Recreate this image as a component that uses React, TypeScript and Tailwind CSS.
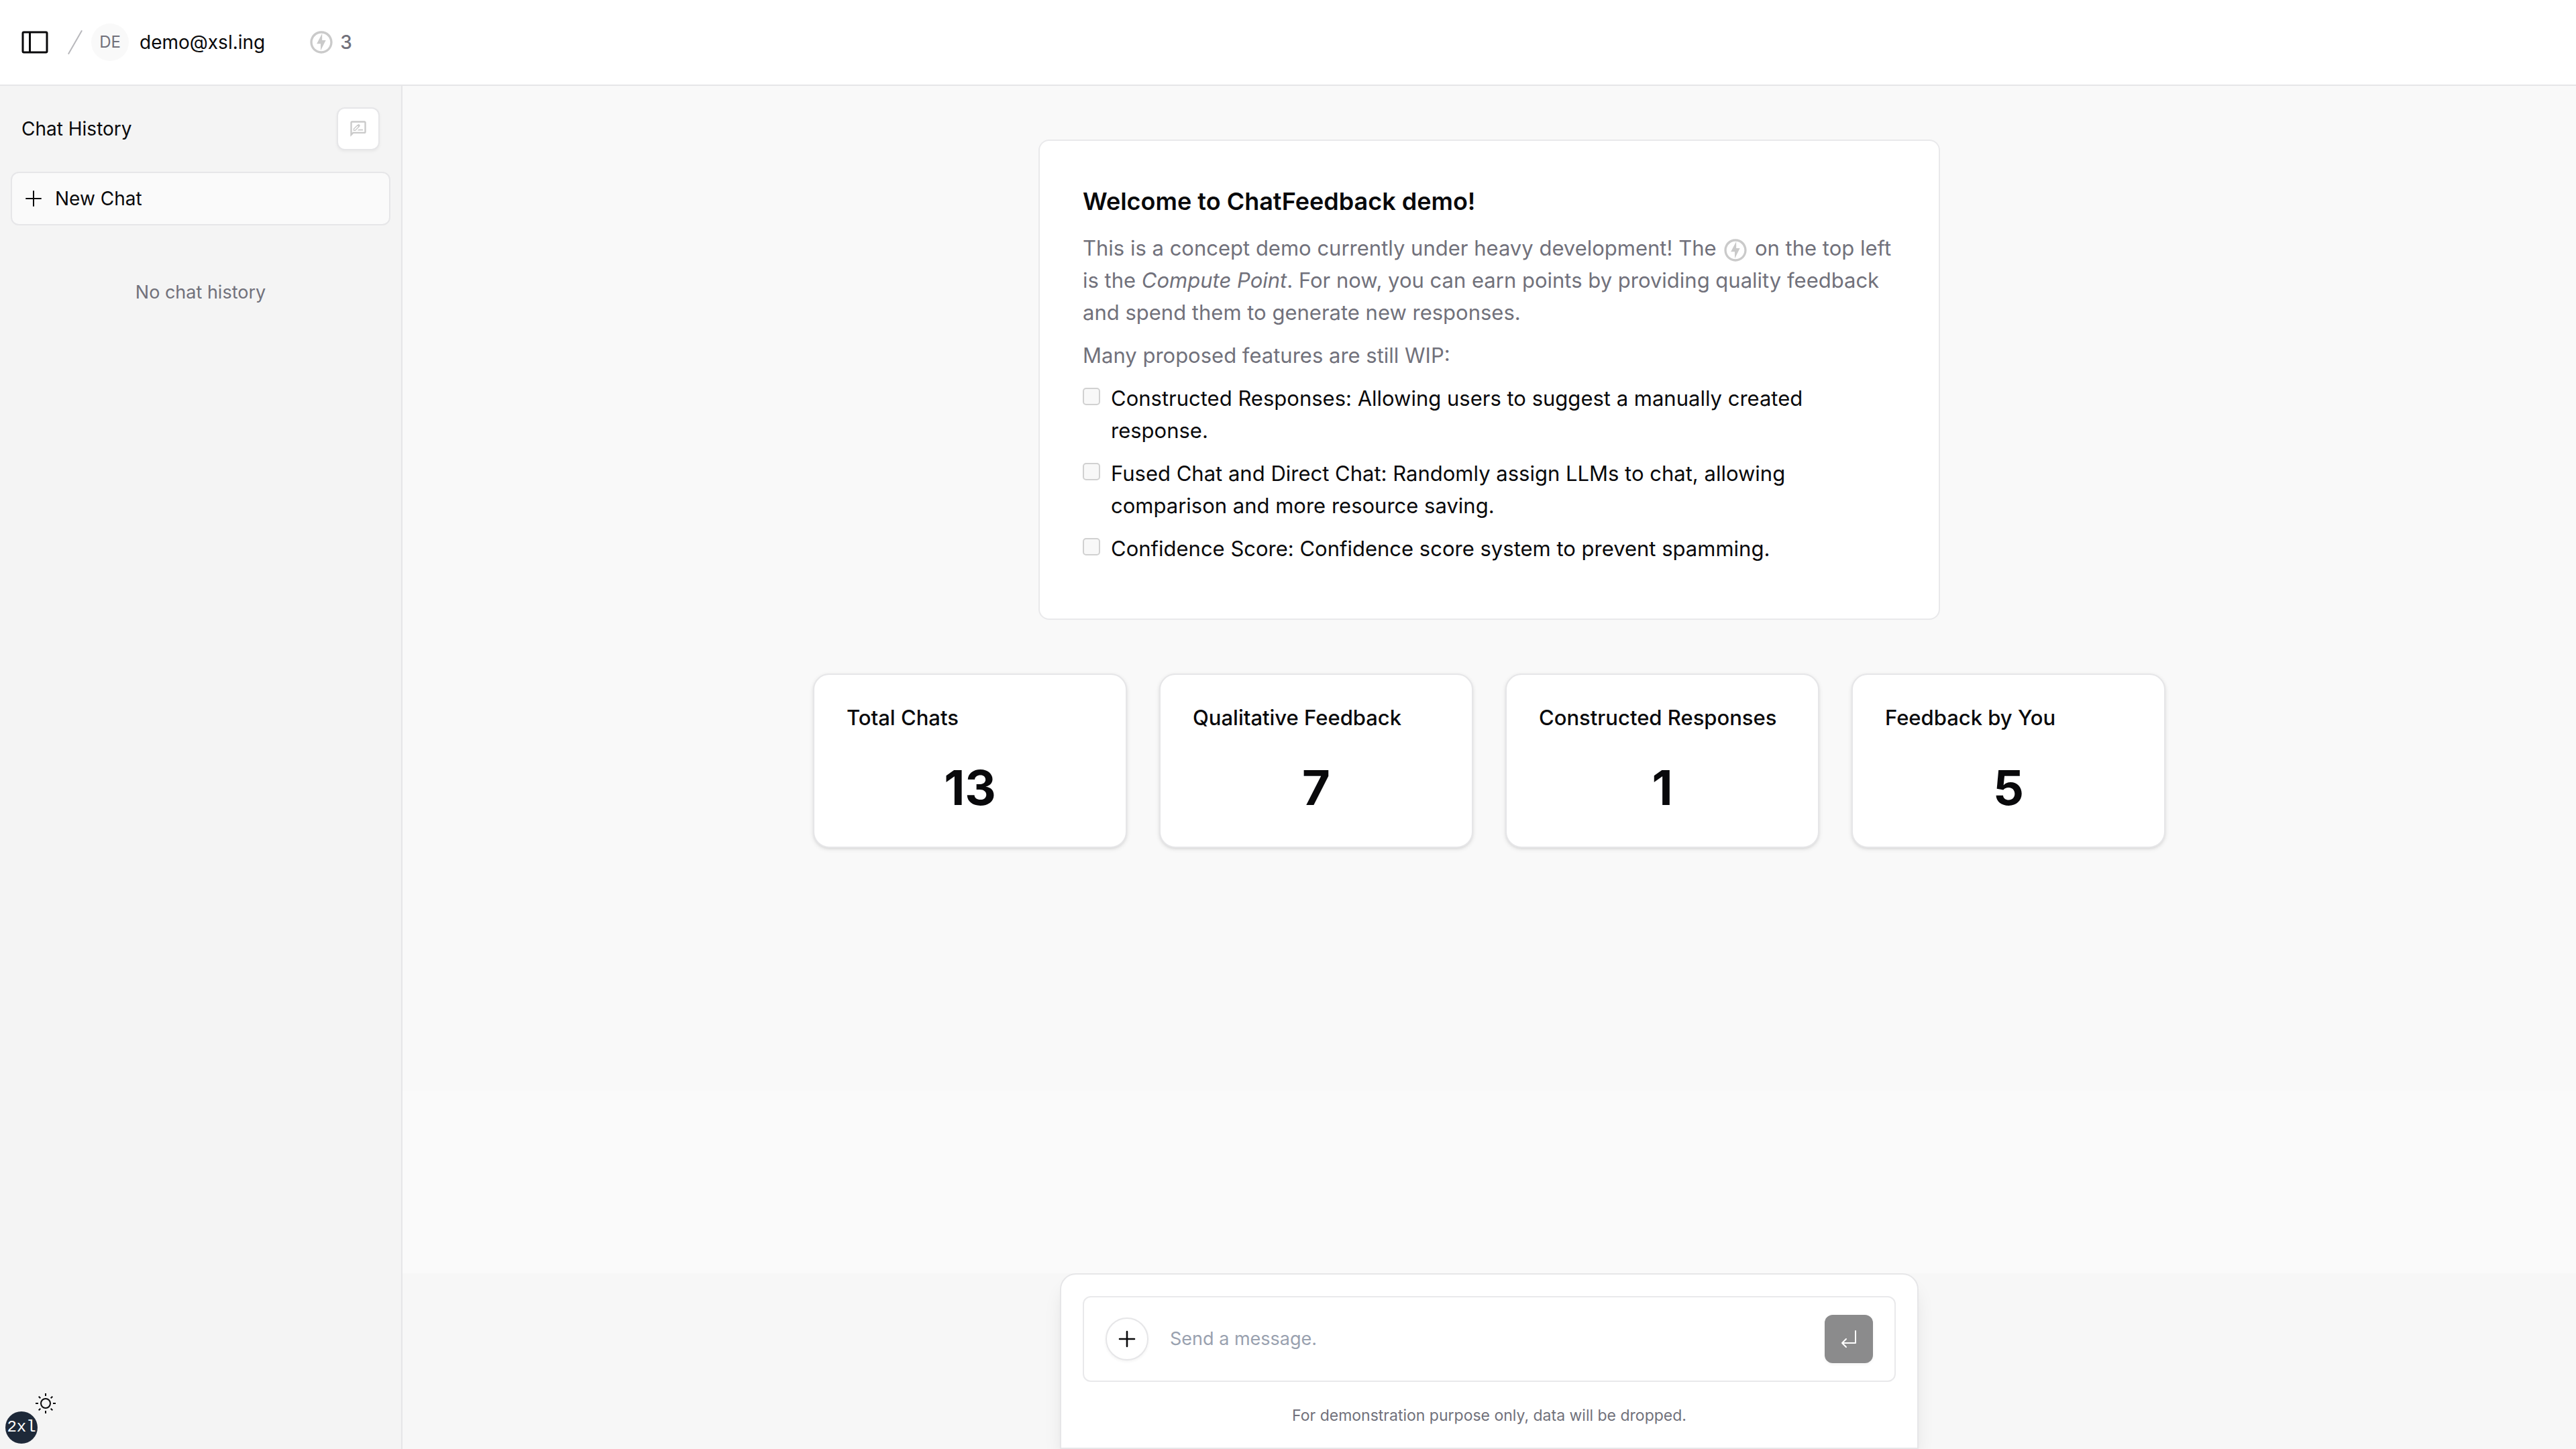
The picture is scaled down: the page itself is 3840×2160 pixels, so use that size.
import type { InputHTMLAttributes } from "react";

type IconProps = { className?: string };

function SidebarIcon({ className }: IconProps) {
  return (
    <svg viewBox="0 0 256 256" fill="currentColor" className={className} aria-hidden="true">
      <path d="M216 40H40a16 16 0 0 0-16 16v144a16 16 0 0 0 16 16h176a16 16 0 0 0 16-16V56a16 16 0 0 0-16-16ZM40 56h40v144H40Zm176 144H96V56h120v144Z" />
    </svg>
  );
}

function SlashIcon({ className }: IconProps) {
  return (
    <svg viewBox="0 0 24 24" fill="none" stroke="currentColor" strokeLinecap="round" className={className} aria-hidden="true">
      <path d="M16.88 3.549L7.12 20.451" />
    </svg>
  );
}

function BoltIcon({ className }: IconProps) {
  return (
    <svg viewBox="0 0 24 24" fill="currentColor" className={className} aria-hidden="true">
      <path d="M12 2.02c-5.51 0-9.98 4.47-9.98 9.98s4.47 9.98 9.98 9.98 9.98-4.47 9.98-9.98S17.51 2.02 12 2.02zm0 17.96c-4.4 0-7.98-3.58-7.98-7.98S7.6 4.02 12 4.02 19.98 7.6 19.98 12 16.4 19.98 12 19.98z" />
      <path d="M12.7 4.2v6H16l-4.6 9.2v-6H7.9z" />
    </svg>
  );
}

function RateReviewIcon({ className }: IconProps) {
  return (
    <svg viewBox="0 0 24 24" fill="currentColor" className={className} aria-hidden="true">
      <path d="M20 2H4c-1.1 0-1.99.9-1.99 2L2 22l4-4h14c1.1 0 2-.9 2-2V4c0-1.1-.9-2-2-2zm0 14H5.17L4 17.17V4h16v12z" />
      <path d="M11 14.2h7v-1.6h-5.4z" />
      <path d="M6.4 14v-1.9l4.7-4.7 1.9 1.9L8.3 14z" fill="none" stroke="currentColor" strokeWidth="1.2" />
      <path d="M10.9 7.4l1-1c.4-.4 1-.4 1.4 0l.8.8c.4.4.4 1 0 1.4l-1 1z" />
    </svg>
  );
}

function PlusIcon({ className }: IconProps) {
  return (
    <svg viewBox="0 0 32 32" fill="none" stroke="currentColor" strokeLinecap="round" className={className} aria-hidden="true">
      <path d="M16 5v22M5 16h22" />
    </svg>
  );
}

function ReturnIcon({ className }: IconProps) {
  return (
    <svg viewBox="0 0 32 32" fill="none" stroke="currentColor" strokeWidth="2" strokeLinecap="round" strokeLinejoin="round" className={className} aria-hidden="true">
      <path d="M26 4v18H6M12 16l-6 6 6 6" />
    </svg>
  );
}

function SunIcon({ className }: IconProps) {
  return (
    <svg viewBox="0 0 32 32" fill="none" stroke="currentColor" strokeWidth="2" className={className} aria-hidden="true">
      <circle cx="16" cy="16" r="7" />
      <path d="M16 1v4M16 27v4M1 16h4M27 16h4M5.7 5.7l2.6 2.6M23.7 23.7l2.6 2.6M5.7 26.3l2.6-2.6M23.7 8.3l2.6-2.6" />
    </svg>
  );
}

const features = [
  "Constructed Responses: Allowing users to suggest a manually created response.",
  "Fused Chat and Direct Chat: Randomly assign LLMs to chat, allowing comparison and more resource saving.",
  "Confidence Score: Confidence score system to prevent spamming.",
];

const stats = [
  { label: "Total Chats", value: 13 },
  { label: "Qualitative Feedback", value: 7 },
  { label: "Constructed Responses", value: 1 },
  { label: "Feedback by You", value: 5 },
];

function TaskCheckbox(props: InputHTMLAttributes<HTMLInputElement>) {
  return (
    <input
      type="checkbox"
      disabled
      className="mt-2 size-[26px] shrink-0 appearance-none rounded-[5px] border-2 border-[#d1d1d1] bg-[#f8f8f8]"
      {...props}
    />
  );
}

function Header() {
  return (
    <header className="flex h-32 shrink-0 items-center border-b-2 border-[#e6e6e8] bg-white pl-7">
      <button type="button" aria-label="Toggle sidebar">
        <SidebarIcon className="size-12" />
      </button>
      <SlashIcon className="ml-3 size-12 text-[#b8b8bc]" />
      <button type="button" className="flex items-center gap-4">
        <span className="flex size-14 items-center justify-center rounded-full bg-[#f9f9f9] text-2xl text-zinc-500">
          DE
        </span>
        <span className="text-[28px]">demo@xsl.ing</span>
      </button>
      <div className="ml-16 flex items-center gap-2 text-[28px] font-medium text-zinc-500">
        <BoltIcon className="size-10 text-[#cacaca]" />3
      </div>
    </header>
  );
}

function Sidebar() {
  return (
    <aside className="flex w-[600px] shrink-0 flex-col border-r-2 border-[#e6e6e8] bg-[#f4f4f4]">
      <div className="flex items-center justify-between px-8 pt-8">
        <h2 className="text-[28px]">Chat History</h2>
        <button
          type="button"
          aria-label="Feedback"
          className="flex size-16 items-center justify-center rounded-xl border-2 border-[#e6e6e8] bg-white shadow-[0_2px_4px_rgb(0_0_0/0.05)]"
        >
          <RateReviewIcon className="size-7 text-[#cacaca]" />
        </button>
      </div>
      <a
        href="#new"
        className="mx-4 mt-8 flex h-20 items-center gap-4 rounded-xl border-2 border-[#e6e6e8] bg-[#fafafa] px-4 text-[28px]"
      >
        <PlusIcon className="size-8 stroke-2" />
        New Chat
      </a>
      <p className="mt-20 text-center text-[27px] leading-10 text-zinc-500">No chat history</p>
      <div className="mt-auto flex flex-col items-start pb-2 pl-2">
        <button type="button" aria-label="Toggle theme" className="-mb-1 ml-11">
          <SunIcon className="size-8" />
        </button>
        <span className="flex size-12 items-center justify-center rounded-full bg-gray-800 font-['Liberation_Mono',monospace] text-2xl text-white">
          2xl
        </span>
      </div>
    </aside>
  );
}

function Welcome() {
  return (
    <section className="mx-auto mt-20 w-full max-w-[1344px] rounded-2xl border-2 border-[#e9e9eb] bg-white px-16 pt-[62px] pb-16 text-[31px] leading-12">
      <h1 className="text-4xl leading-14 font-semibold">Welcome to ChatFeedback demo!</h1>
      <p className="mt-[18px] text-zinc-500">
        This is a concept demo currently under heavy development! The{" "}
        <BoltIcon className="inline size-10 text-[#cacaca]" /> on the top left is the <em>Compute Point</em>. For now,
        you can earn points by providing quality feedback and spend them to generate new responses.
      </p>
      <p className="mt-4 text-zinc-500">Many proposed features are still WIP:</p>
      <ul>
        {features.map((feature, i) => (
          <li key={feature} className="my-4 flex gap-4">
            <TaskCheckbox id={`feature-${i}`} />
            <label htmlFor={`feature-${i}`}>{feature}</label>
          </li>
        ))}
      </ul>
    </section>
  );
}

function Stats() {
  return (
    <section className="mx-auto mt-20 grid w-full max-w-[2016px] grid-cols-4 gap-12">
      {stats.map((stat) => (
        <div
          key={stat.label}
          className="rounded-3xl border-2 border-[#e6e6e8] bg-white p-12 shadow-[0_2px_6px_rgb(0_0_0/0.1),0_2px_4px_-2px_rgb(0_0_0/0.1)]"
        >
          <h3 className="text-[31px] leading-8 font-medium">{stat.label}</h3>
          <p className="mt-12 text-center text-7xl leading-20 font-bold">{stat.value}</p>
        </div>
      ))}
    </section>
  );
}

function Composer() {
  return (
    <div className="mt-auto bg-[#fafafa] pt-[271px]">
      <div className="bg-[#f7f7f7]">
        <form className="mx-auto w-full max-w-[1280px] rounded-t-3xl border-2 border-[#e6e6e8] bg-white p-8 shadow-[0_20px_30px_-6px_rgb(0_0_0/0.1),0_8px_12px_-8px_rgb(0_0_0/0.1)]">
          <div className="flex h-32 items-center rounded-xl border-2 border-[#e9e9eb] px-8">
            <button
              type="button"
              aria-label="New chat"
              className="flex size-16 items-center justify-center rounded-full border-2 border-[#e6e6e8] bg-white shadow-[0_2px_4px_rgb(0_0_0/0.05)]"
            >
              <PlusIcon className="size-8 stroke-[2.6px]" />
            </button>
            <input
              type="text"
              aria-label="Message"
              placeholder="Send a message."
              className="ml-8 min-w-0 flex-1 text-[27px] outline-none placeholder:text-gray-400"
            />
            <button
              type="submit"
              aria-label="Send message"
              className="flex size-[72px] items-center justify-center rounded-xl bg-[#8b8b8c] text-white shadow-[0_2px_4px_rgb(0_0_0/0.05)]"
            >
              <ReturnIcon className="size-8" />
            </button>
          </div>
          <p className="mt-[34px] text-center text-[23px] leading-8 text-zinc-500">
            For demonstration purpose only, data will be dropped.
          </p>
        </form>
      </div>
    </div>
  );
}

export default function App() {
  return (
    <div className="flex min-h-screen flex-col font-['Inter',sans-serif] text-zinc-950">
      <Header />
      <div className="flex flex-1">
        <Sidebar />
        <main className="flex min-w-0 flex-1 flex-col bg-[#f9f9f9]">
          <Welcome />
          <Stats />
          <Composer />
        </main>
      </div>
    </div>
  );
}
